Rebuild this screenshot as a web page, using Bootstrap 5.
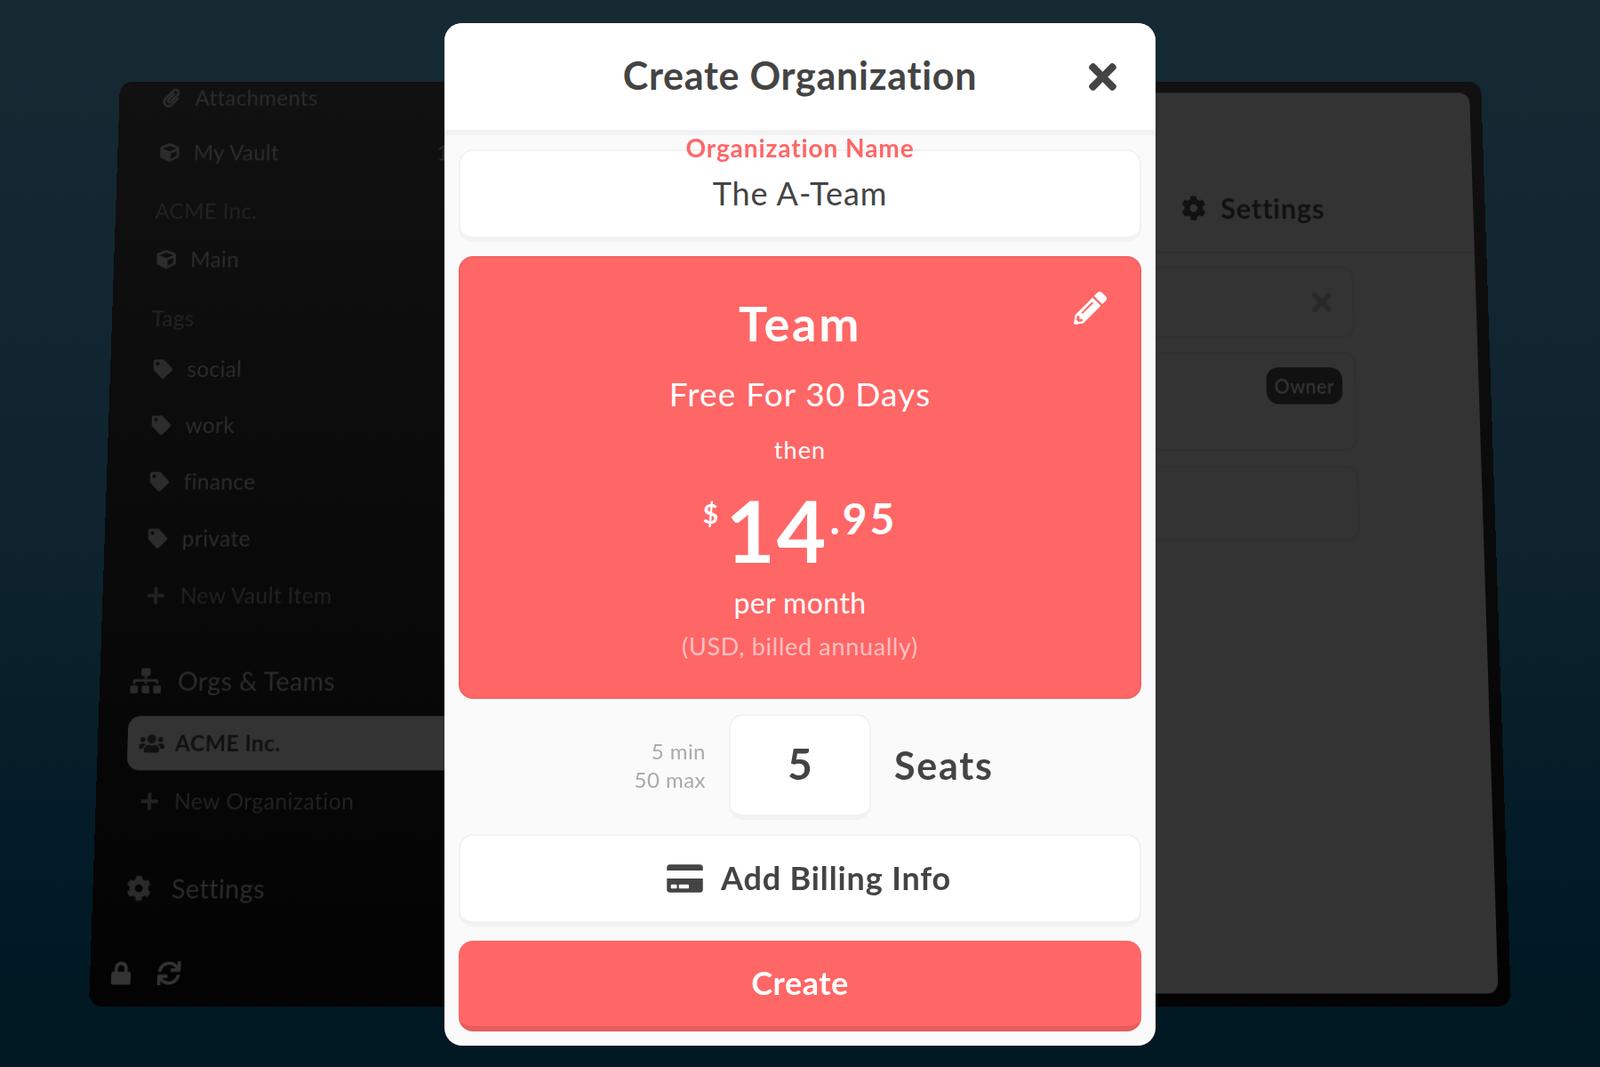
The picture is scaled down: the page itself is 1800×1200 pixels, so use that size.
<!DOCTYPE html>
<html lang="en">
<head>
<meta charset="utf-8">
<title>Create Organization</title>
<link href="https://cdn.jsdelivr.net/npm/bootstrap@5.3.0/dist/css/bootstrap.min.css" rel="stylesheet">
<style>
html,body{height:1200px;overflow:hidden;margin:0}
body{position:relative;padding-top:26px;background:linear-gradient(180deg,#162a34 0%,#0e232e 50%,#011a25 85%,#001822 100%);font-family:"Lato","Noto Sans",sans-serif;letter-spacing:.025em;color:#444}
svg{fill:currentColor;display:block;flex:none}

/* the dimmed app window behind the dialog, tilted on its own canvas */
.app-frame{position:absolute;left:0;top:0;width:1600px;height:1040px;transform-origin:0 0;transform:matrix3d(.9569,0,0,0,-.0378,.9531,0,-.00004144,0,0,1,0,135,92,0,1);border-radius:14px;background:linear-gradient(180deg,#111 0%,#030303 100%);overflow:hidden}
.side-col{width:420px;flex:none;font-size:25px;color:#2c2c2c}
.side-row{height:64px;padding-left:50px;gap:17px;position:relative}
.side-row svg{width:22px;height:22px}
.side-row.first{height:38px;margin-bottom:13px}
.side-head{height:40px;padding-left:46px;color:#232323}
.side-muted{color:#222}
.side-count{position:absolute;left:374px;color:#2c2c2c}
.side-big{height:50px;padding-left:35px;font-size:29px;color:#2b2b2b}
.side-big svg{height:28px}
.side-active{height:60px;margin-left:34px;padding-left:13px;gap:12px;background:#333;color:#111;font-weight:700;border-radius:14px 0 0 14px}
.side-active svg{width:29px;height:23px}
.main-panel{margin:13px 14px 14px 0;background:#333;border-radius:12px;color:#111}
.main-head{height:187px;padding:111px 0 0 825px;gap:17px;border-bottom:2px solid #2f2f2f;font-size:32px;font-weight:700;align-items:flex-start;letter-spacing:.024em}
.main-head svg{width:29px;height:29px;margin-top:9px}
.ghost-card{border:2px solid #303030;border-radius:14px;margin-left:162px;width:862px;padding-right:24px}
.owner-pill{background:#111;color:#333;font-size:22px;font-weight:600;border-radius:14px;width:88px;height:42px;margin-top:16px}

/* dialog */
.dlg{position:relative;z-index:2;width:800px;height:1150px;margin:0 auto;border-radius:20px;overflow:hidden;background:#fafafa}
.dlg-top{height:126px;background:#fff;border-bottom:6px solid #f2f2f2;position:relative;padding-bottom:4px}
.dlg-title{font-size:43px;font-weight:700;color:#444;margin:0;line-height:1;letter-spacing:.017em}
.dlg-x{position:absolute;left:725px;top:38px;width:31px;height:45px;color:#444;background:none;border:0;padding:0}
.dlg-x svg{width:31px;height:45px}
.dlg-body{padding:16px}
.white-box{background:#fff;border:2px solid #f2f2f2;border-bottom-width:6px;border-radius:16px}
.name-box{height:104px;position:relative;font-size:36px;text-align:center;color:#444;padding-top:15px;line-height:64px;letter-spacing:.027em}
.name-label{position:absolute;left:0;right:0;top:-18px;font-size:28px;font-weight:700;line-height:28px;color:#f66;letter-spacing:.033em}
.plan{height:498px;background:#f66;color:#fff;border-radius:16px;border:2px solid #f26262;position:relative;padding-top:42px}
.plan-edit{position:absolute;right:37px;top:38px;width:37px;height:37px;color:#fff;background:none;border:0;padding:0}
.plan-edit svg{width:37px;height:37px}
.plan-name{font-size:54px;font-weight:700;line-height:64px;letter-spacing:.05em}
.plan-free{font-size:37px;line-height:44px;margin-top:25px;letter-spacing:.032em}
.plan-then{font-size:27px;line-height:34px;margin-top:24px;letter-spacing:.04em}
.price{height:100px;margin-top:30px}
.price-cur{font-size:30px;font-weight:700;line-height:1;margin-top:9px;margin-right:8px;letter-spacing:0}
.price-int{font-size:96px;font-weight:700;line-height:94px;letter-spacing:.02em;margin-top:-4px}
.price-dec{font-size:48px;font-weight:700;line-height:1;margin-left:2px;margin-top:6px;letter-spacing:.06em}
.plan-per{font-size:32px;line-height:40px;margin-top:5px}
.plan-bill{font-size:27px;line-height:34px;margin-top:12px;color:rgba(255,255,255,.6);letter-spacing:.026em}
.seats-row{height:119px;margin-top:17px;margin-bottom:16px}
.seat-note{width:278px;font-size:24px;line-height:32px;color:#aaa;text-align:right;margin-right:26px;letter-spacing:.02em;padding-bottom:3px}
.seat-box{width:160px;height:119px;font-size:48px;font-weight:700;color:#444;line-height:1;padding-bottom:3px}
.seat-word{font-size:43px;font-weight:700;color:#444;margin-left:26px;letter-spacing:.04em;padding-bottom:3px}
.billing{height:104px;width:100%;font-size:36px;font-weight:700;color:#444;gap:20px;padding-left:20px;letter-spacing:.024em}
.billing span{padding-bottom:2px}
.billing svg{width:41px;height:36px}
.go-btn{height:102px;width:100%;margin-top:16px;padding-bottom:8px;background:#f66;color:#fff;font-size:36px;font-weight:700;border:0;border-bottom:6px solid #e55c5c;border-radius:16px;letter-spacing:.015em}
.go-btn:hover,.go-btn:active{background:#f66!important;color:#fff!important;border-color:#e55c5c!important}
</style>
</head>
<body>
<svg width="0" height="0" style="position:absolute" aria-hidden="true">
<symbol id="i-times" viewBox="0 0 352 512"><path d="M242.72 256l100.07-100.07c12.28-12.28 12.28-32.19 0-44.48l-22.24-22.24c-12.28-12.28-32.19-12.28-44.48 0L176 189.28 75.93 89.21c-12.28-12.28-32.19-12.28-44.48 0L9.21 111.45c-12.28 12.28-12.28 32.19 0 44.48L109.28 256 9.21 356.07c-12.28 12.28-12.28 32.19 0 44.48l22.24 22.24c12.28 12.28 32.2 12.28 44.48 0L176 322.72l100.07 100.07c12.28 12.28 32.2 12.28 44.48 0l22.24-22.24c12.28-12.28 12.28-32.19 0-44.48L242.72 256z"/></symbol>
<symbol id="i-pencil" viewBox="0 0 512 512"><path d="M497.9 142.1l-46.1 46.1c-4.7 4.7-12.3 4.7-17 0l-111-111c-4.7-4.7-4.7-12.3 0-17l46.1-46.1c18.7-18.7 49.1-18.7 67.9 0l60.1 60.1c18.8 18.7 18.8 49.1 0 67.9zM284.2 99.8L21.6 362.4.4 483.9c-2.9 16.4 11.4 30.6 27.8 27.8l121.5-21.3 262.6-262.6c4.7-4.7 4.7-12.3 0-17l-111-111c-4.8-4.7-12.4-4.7-17.1 0zM124.1 339.9c-5.5-5.5-5.5-14.3 0-19.8l154-154c5.5-5.5 14.3-5.5 19.8 0s5.5 14.3 0 19.8l-154 154c-5.5 5.5-14.3 5.5-19.8 0zM88 424h48v36.3l-64.5 11.3-31.1-31.1L51.7 376H88v48z"/></symbol>
<symbol id="i-card" viewBox="0 0 576 512"><path d="M0 432c0 26.5 21.5 48 48 48h480c26.5 0 48-21.5 48-48V256H0v176zm192-68c0-6.6 5.4-12 12-12h136c6.6 0 12 5.4 12 12v40c0 6.6-5.4 12-12 12H204c-6.6 0-12-5.4-12-12v-40zm-128 0c0-6.6 5.4-12 12-12h72c6.6 0 12 5.4 12 12v40c0 6.6-5.4 12-12 12H76c-6.6 0-12-5.4-12-12v-40zM576 80v48H0V80c0-26.5 21.5-48 48-48h480c26.5 0 48 21.5 48 48z"/></symbol>
<symbol id="i-cog" viewBox="0 0 512 512"><path d="M487.4 315.7l-42.6-24.6c4.3-23.2 4.3-47 0-70.2l42.6-24.6c4.9-2.8 7.1-8.6 5.5-14-11.1-35.6-30-67.8-54.7-94.6-3.8-4.1-10-5.1-14.8-2.3L380.8 110c-17.9-15.4-38.5-27.3-60.8-35.1V25.8c0-5.6-3.9-10.5-9.4-11.7-36.7-8.2-74.3-7.8-109.2 0-5.5 1.2-9.4 6.1-9.4 11.7V75c-22.2 7.9-42.8 19.8-60.8 35.1L88.7 85.5c-4.9-2.8-11-1.9-14.8 2.3-24.7 26.7-43.6 58.9-54.7 94.6-1.7 5.4.6 11.2 5.5 14L67.3 221c-4.3 23.2-4.3 47 0 70.2l-42.6 24.6c-4.9 2.8-7.1 8.6-5.5 14 11.1 35.6 30 67.8 54.7 94.6 3.8 4.1 10 5.1 14.8 2.3l42.6-24.6c17.9 15.4 38.5 27.3 60.8 35.1v49.2c0 5.6 3.9 10.5 9.4 11.7 36.7 8.2 74.3 7.8 109.2 0 5.5-1.2 9.4-6.1 9.4-11.7v-49.2c22.2-7.9 42.8-19.8 60.8-35.1l42.6 24.6c4.9 2.8 11 1.9 14.8-2.3 24.7-26.7 43.6-58.9 54.7-94.6 1.5-5.5-.7-11.3-5.6-14.1zM256 336c-44.1 0-80-35.9-80-80s35.9-80 80-80 80 35.9 80 80-35.9 80-80 80z"/></symbol>
<symbol id="i-tag" viewBox="0 0 512 512"><path d="M0 252.118V48C0 21.49 21.49 0 48 0h204.118a48 48 0 0 1 33.941 14.059l211.882 211.882c18.745 18.745 18.745 49.137 0 67.882L293.823 497.941c-18.745 18.745-49.137 18.745-67.882 0L14.059 286.059A48 48 0 0 1 0 252.118zM112 64c-26.51 0-48 21.49-48 48s21.49 48 48 48 48-21.49 48-48-21.49-48-48-48z"/></symbol>
<symbol id="i-plus" viewBox="0 0 448 512"><path d="M416 208H272V64c0-17.67-14.33-32-32-32h-32c-17.67 0-32 14.33-32 32v144H32c-17.67 0-32 14.33-32 32v32c0 17.67 14.33 32 32 32h144v144c0 17.67 14.33 32 32 32h32c17.67 0 32-14.33 32-32V304h144c17.67 0 32-14.33 32-32v-32c0-17.67-14.33-32-32-32z"/></symbol>
<symbol id="i-lock" viewBox="0 0 448 512"><path d="M400 224h-24v-72C376 68.2 307.8 0 224 0S72 68.2 72 152v72H48c-26.5 0-48 21.5-48 48v192c0 26.5 21.5 48 48 48h352c26.5 0 48-21.5 48-48V272c0-26.5-21.5-48-48-48zm-104 0H152v-72c0-39.7 32.3-72 72-72s72 32.3 72 72v72z"/></symbol>
<symbol id="i-sync" viewBox="0 0 512 512"><path d="M440.65 12.57l4 82.77A247.16 247.16 0 0 0 255.83 8C134.73 8 33.91 94.92 12.29 209.82A12 12 0 0 0 24.09 224h49.05a12 12 0 0 0 11.67-9.26 175.91 175.91 0 0 1 317-56.94l-101.46-4.86a12 12 0 0 0-12.57 12v47.41a12 12 0 0 0 12 12H500a12 12 0 0 0 12-12V12a12 12 0 0 0-12-12h-47.37a12 12 0 0 0-11.98 12.57zM255.83 432a175.61 175.61 0 0 1-146-77.8l101.8 4.87a12 12 0 0 0 12.57-12v-47.4a12 12 0 0 0-12-12H12a12 12 0 0 0-12 12V500a12 12 0 0 0 12 12h47.35a12 12 0 0 0 12-12.6l-4.15-82.57A247.17 247.17 0 0 0 255.83 504c121.11 0 221.93-86.92 243.55-201.82a12 12 0 0 0-11.8-14.18h-49.05a12 12 0 0 0-11.67 9.26A175.86 175.86 0 0 1 255.83 432z"/></symbol>
<symbol id="i-clip" viewBox="0 0 448 512"><path d="M43.246 466.142c-58.43-60.289-57.341-157.511 1.386-217.581L254.392 34c44.316-45.332 116.351-45.336 160.671 0 43.89 44.894 43.943 117.329 0 162.276L232.214 383.128c-29.855 30.537-78.633 30.111-107.982-.998-28.275-29.97-27.368-77.473 1.452-106.953l143.743-146.835c6.182-6.314 16.312-6.422 22.626-.241l22.861 22.379c6.315 6.182 6.422 16.312.241 22.626L171.427 319.927c-4.932 5.045-5.236 13.428-.648 18.292 4.372 4.634 11.245 4.711 15.688.165l182.849-186.851c19.613-20.062 19.613-52.725-.011-72.798-19.189-19.627-49.957-19.637-69.154 0L90.39 293.295c-34.763 35.56-35.299 93.12-1.191 128.313 34.01 35.093 88.985 35.137 123.058.286l172.06-175.999c6.177-6.319 16.307-6.433 22.626-.256l22.877 22.364c6.319 6.177 6.434 16.307.256 22.626l-172.06 175.998c-59.576 60.938-155.943 60.216-214.77-.485z"/></symbol>
<symbol id="i-cube" viewBox="0 0 512 512"><path d="M239.1 6.3l-208 78c-18.7 7-31.1 25-31.1 45v225.1c0 18.2 10.3 34.8 26.5 42.9l208 104c13.5 6.8 29.4 6.8 42.9 0l208-104c16.3-8.1 26.5-24.8 26.5-42.9V129.3c0-20-12.4-37.9-31.1-44.9l-208-78C262 2.2 250 2.2 239.1 6.3zM256 68.4l192 72v1.1l-192 78-192-78v-1.1l192-72zm32 356V275.5l160-65v133.9l-160 80z"/></symbol>
<symbol id="i-sitemap" viewBox="0 0 640 512"><path d="M128 352H32c-17.67 0-32 14.33-32 32v96c0 17.67 14.33 32 32 32h96c17.67 0 32-14.33 32-32v-96c0-17.67-14.33-32-32-32zm-24-80h192v48h48v-48h192v48h48v-57.59c0-21.17-17.23-38.41-38.41-38.41H344v-64h40c17.67 0 32-14.33 32-32V32c0-17.67-14.33-32-32-32H256c-17.67 0-32 14.33-32 32v96c0 17.67 14.33 32 32 32h40v64H94.41C73.23 224 56 241.23 56 262.41V320h48v-48zm264 80h-96c-17.67 0-32 14.33-32 32v96c0 17.67 14.33 32 32 32h96c17.67 0 32-14.33 32-32v-96c0-17.67-14.33-32-32-32zm240 0h-96c-17.67 0-32 14.33-32 32v96c0 17.67 14.33 32 32 32h96c17.67 0 32-14.33 32-32v-96c0-17.67-14.33-32-32-32z"/></symbol>
<symbol id="i-users" viewBox="0 0 640 512"><path d="M96 224c35.3 0 64-28.7 64-64s-28.7-64-64-64-64 28.7-64 64 28.7 64 64 64zm448 0c35.3 0 64-28.7 64-64s-28.7-64-64-64-64 28.7-64 64 28.7 64 64 64zm32 32h-64c-17.6 0-33.5 7.1-45.1 18.6 40.3 22.1 68.9 62 75.1 109.4h66c17.7 0 32-14.3 32-32v-32c0-35.3-28.7-64-64-64zm-256 0c61.9 0 112-50.1 112-112S381.9 32 320 32 208 82.1 208 144s50.1 112 112 112zm76.8 32h-8.3c-20.8 10-43.9 16-68.5 16s-47.6-6-68.5-16h-8.3C179.6 288 128 339.6 128 403.2V432c0 26.5 21.5 48 48 48h288c26.5 0 48-21.5 48-48v-28.8c0-63.6-51.6-115.2-115.2-115.2zm-223.7-13.4C161.5 263.1 145.6 256 128 256H64c-35.3 0-64 28.7-64 64v32c0 17.7 14.3 32 32 32h65.9c6.3-47.4 34.9-87.3 75.2-109.4z"/></symbol>
</svg>

<div class="app-frame d-flex">
  <nav class="side-col">
    <div class="side-row first d-flex align-items-center"><svg><use href="#i-clip"/></svg><span>Attachments</span></div>
    <div class="side-row d-flex align-items-center"><svg><use href="#i-cube"/></svg><span>My Vault</span><span class="side-count">1</span></div>
    <div class="side-head d-flex align-items-center mt-3">ACME Inc.</div>
    <div class="side-row d-flex align-items-center mt-1"><svg><use href="#i-cube"/></svg><span>Main</span></div>
    <div class="side-head d-flex align-items-center mt-3">Tags</div>
    <div class="side-row d-flex align-items-center" style="margin-top:6px"><svg><use href="#i-tag"/></svg><span>social</span></div>
    <div class="side-row d-flex align-items-center"><svg><use href="#i-tag"/></svg><span>work</span></div>
    <div class="side-row d-flex align-items-center"><svg><use href="#i-tag"/></svg><span>finance</span></div>
    <div class="side-row d-flex align-items-center"><svg><use href="#i-tag"/></svg><span>private</span></div>
    <div class="side-row d-flex align-items-center side-muted"><svg><use href="#i-plus"/></svg><span>New Vault Item</span></div>
    <div class="side-big d-flex align-items-center" style="margin-top:38px;gap:19px"><svg style="width:35px"><use href="#i-sitemap"/></svg><span>Orgs &amp; Teams</span></div>
    <div class="side-active d-flex align-items-center" style="margin-top:14px"><svg><use href="#i-users"/></svg><span>ACME Inc.</span></div>
    <div class="side-row d-flex align-items-center side-muted" style="margin-top:2px"><svg><use href="#i-plus"/></svg><span>New Organization</span></div>
    <div class="side-big d-flex align-items-center" style="margin-top:33px;height:60px;padding-left:38px;gap:23px"><svg style="width:28px"><use href="#i-cog"/></svg><span>Settings</span></div>
    <div class="d-flex align-items-center" style="margin-top:42px;height:40px;padding-left:24px;gap:30px;color:#333"><svg width="22" height="26"><use href="#i-lock"/></svg><svg width="26" height="26"><use href="#i-sync"/></svg></div>
  </nav>
  <main class="main-panel flex-grow-1">
    <div class="main-head d-flex"><svg><use href="#i-cog"/></svg><span>Settings</span></div>
    <div class="ghost-card d-flex align-items-center justify-content-end" style="height:82px;margin-top:15px;color:#282828"><svg width="23" height="33"><use href="#i-times"/></svg></div>
    <div class="ghost-card d-flex align-items-start justify-content-end" style="height:113px;margin-top:16px;padding-right:14px"><div class="owner-pill d-flex align-items-center justify-content-center">Owner</div></div>
    <div class="ghost-card" style="height:85px;margin-top:17px"></div>
  </main>
</div>

<section class="dlg d-flex flex-column" role="dialog">
  <header class="dlg-top d-flex align-items-center justify-content-center">
    <h1 class="dlg-title">Create Organization</h1>
    <button class="dlg-x" type="button" aria-label="Close"><svg><use href="#i-times"/></svg></button>
  </header>
  <div class="dlg-body">
    <div class="white-box name-box"><label class="name-label">Organization Name</label>The A-Team</div>
    <div class="plan mt-3 text-center">
      <button class="plan-edit" type="button" aria-label="Edit"><svg><use href="#i-pencil"/></svg></button>
      <div class="plan-name">Team</div>
      <div class="plan-free">Free For 30 Days</div>
      <div class="plan-then">then</div>
      <div class="price d-flex justify-content-center align-items-start"><span class="price-cur">$</span><span class="price-int">14</span><span class="price-dec">.95</span></div>
      <div class="plan-per">per month</div>
      <div class="plan-bill">(USD, billed annually)</div>
    </div>
    <div class="seats-row d-flex align-items-center">
      <div class="seat-note">5 min<br>50 max</div>
      <div class="white-box seat-box d-flex align-items-center justify-content-center">5</div>
      <div class="seat-word">Seats</div>
    </div>
    <div class="white-box billing d-flex align-items-center justify-content-center"><svg><use href="#i-card"/></svg><span>Add Billing Info</span></div>
    <button class="btn go-btn" type="button">Create</button>
  </div>
</section>
</body>
</html>
